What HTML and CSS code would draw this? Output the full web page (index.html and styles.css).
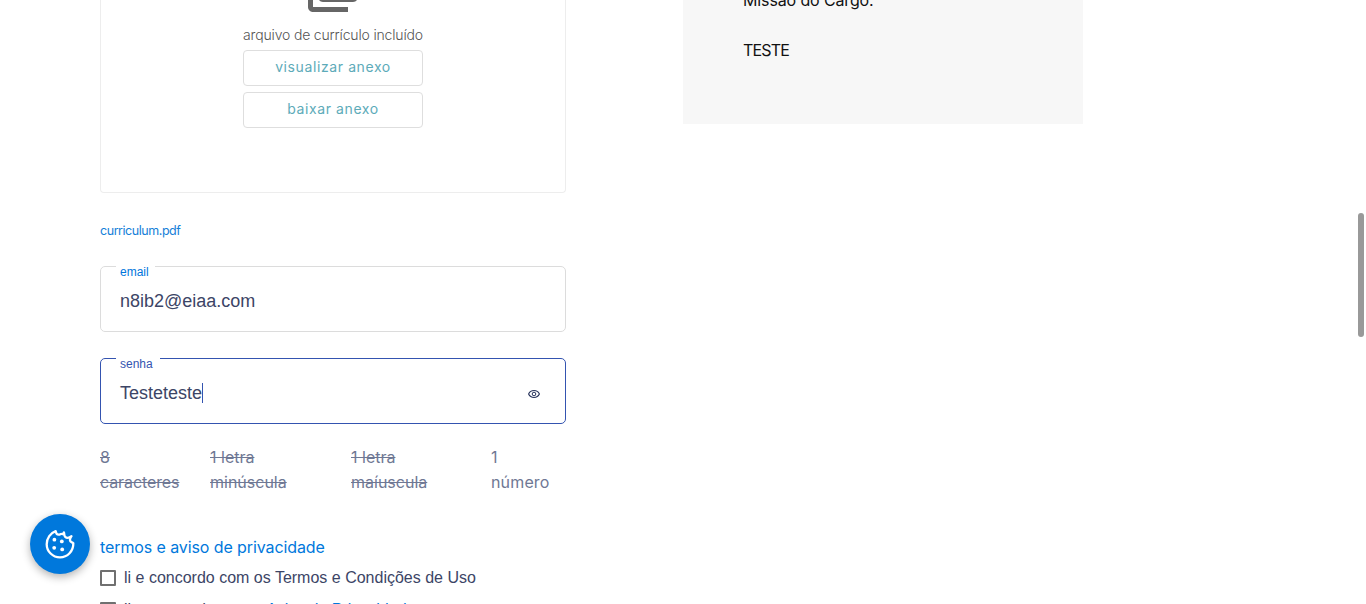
FILE: index.html
```
<!DOCTYPE html>
<html lang="pt-BR">
<head>
<meta charset="utf-8">
<title>Candidatura</title>
<link rel="stylesheet" href="styles.css">
</head>
<body>
<main class="page">
  <form class="form">
    <section class="upload">
      <svg class="upload-icon" width="60" height="60" viewBox="0 0 24 24"><path fill="#666" d="M4 6H2v14c0 1.100.9 2 2 2h14v-2H4V6zm16-4H8c-1.100 0-2 .9-2 2v12c0 1.100.9 2 2 2h12c1.100 0 2-.9 2-2V4c0-1.100-.9-2-2-2zm0 14H8V4h12v12z"/></svg>
      <p class="upload-note"><span>arquivo de currículo incluído</span></p>
      <button type="button" class="upload-btn view"><span>visualizar anexo</span></button>
      <button type="button" class="upload-btn download"><span>baixar anexo</span></button>
    </section>
    <a class="file-link"><span>curriculum.pdf</span></a>
    <fieldset class="field">
      <legend class="notch notch-email"></legend>
      <label class="field-label email-label"><span>email</span></label>
      <div class="field-row"><span class="field-value email-value">n8ib2@eiaa.com</span></div>
    </fieldset>
    <fieldset class="field focused">
      <legend class="notch notch-senha"></legend>
      <label class="field-label senha-label"><span>senha</span></label>
      <div class="field-row"><span class="field-value senha-value">Testeteste</span><i class="caret"></i>
        <svg class="eye" width="12" height="10" viewBox="0 0 12 10" fill="none" stroke="#27335c"><path d="M.6 5C2.700.4 9.300.4 11.400 5 9.300 9.600 2.700 9.600.6 5z" stroke-width="1.100"/><circle cx="6" cy="5" r="1.800"/></svg>
      </div>
    </fieldset>
    <ul class="rules">
      <li class="met"><span>8</span><br><span class="r1">caracteres</span></li>
      <li class="met"><span class="r2">1 letra</span><br><span class="r3">minúscula</span></li>
      <li class="met"><span class="r2">1 letra</span><br><span class="r4">maíuscula</span></li>
      <li><span>1</span><br><span class="r5">número</span></li>
    </ul>
    <h2 class="terms-title"><span>termos e aviso de privacidade</span></h2>
    <label class="check"><i class="box"></i><span class="check-text">li e concordo com os Termos e Condições de Uso</span></label>
    <label class="check"><i class="box"></i><span class="check-text privacy">li e concordo com o <a>Aviso de Privacidade</a></span></label>
  </form>
  <aside class="job">
    <p class="mission"><span>Missão do Cargo:</span></p>
    <p class="teste"><span>TESTE</span></p>
  </aside>
</main>
<button class="cookie" aria-label="cookies">
  <svg width="30" height="30" viewBox="0 0 30 30"><path d="M10.700 2.100C11 4.300 12 5.800 13.800 5.700c1.500-.1 1.700-1.100 2.800-.7 1 .3 2-.4 2.300-1.600.6 1.200-.1 3.300 1.300 4.500 1.700 1.400 4.200.9 6.300-.8-1.200 1.700-2.200 3.900-.9 5.500.7.900 1.800.6 2.700 1.700C28.500 22.200 22.500 28.400 15 28.400 7.700 28.400 1.700 22.500 1.700 15.200c0-6 3.800-11.200 9-13.100z" fill="none" stroke="#fff" stroke-width="2.300" stroke-linejoin="round"/><g fill="#fff"><circle cx="9.400" cy="10.700" r="1.900"/><circle cx="16.800" cy="12.400" r="1.900"/><circle cx="9.200" cy="18.800" r="1.900"/><circle cx="17.200" cy="20.400" r="1.900"/></g></svg>
</button>
<div class="scroll-thumb"></div>
</body>
</html>
```
FILE: styles.css
```
* { box-sizing: border-box; }
html, body { height: 604px; overflow: hidden; }
body { margin: 0; background: #fff; color: #3c4566; font: 16px/25px "Liberation Sans", Arial, sans-serif; }
p, h2, ul { margin: 0; padding: 0; }
.page { display: flex; align-items: flex-start; gap: 117px; padding-left: 100px; height: 604px; overflow: hidden; }
.form { width: 466px; flex: none; }
.upload { height: 193px; border: 1px solid #ededed; border-top: 0; border-radius: 0 0 4px 4px; display: flex; flex-direction: column; align-items: center; }
.upload-icon { margin-top: -43px; flex: none; }
.upload-note { margin-top: 8px; height: 25px; line-height: 20px; font-family: Inter, sans-serif; font-weight: 300; font-size: 14px; color: #555; white-space: nowrap; letter-spacing: -.17px; }
.upload-btn { width: 180px; height: 36px; padding: 0 0 3px; margin-bottom: 6px; border: 1px solid #dedede; border-radius: 4px; background: #fff; color: #5dabb9; font: 14px/19px Inter, sans-serif; letter-spacing: .6px; }
.file-link { display: block; margin-top: 28px; height: 20px; line-height: 20px; font-family: Inter, sans-serif; font-size: 12.5px; color: #1680d8; letter-spacing: -.45px; }
.field { position: relative; width: 466px; height: 66px; margin: 25px 0 0; padding: 0; border: 1px solid #dcdcdc; border-radius: 5px; }
.field.focused { border-color: #3454b0; margin-top: 26px; }
.notch { height: 1px; padding: 0; margin-left: 15px; }
.notch-email { width: 39px; }
.notch-senha { width: 44px; }
.field-label { position: absolute; left: 19px; top: -2px; font-size: 12px; line-height: 14px; color: #0076dc; }
.focused .field-label { color: #3454b0; }
.field-row { display: flex; align-items: center; height: 64px; padding: 4px 25px 0 19px; }
.field-value { font-size: 18px; line-height: 24px; }
.caret { width: 1px; height: 20px; background: #3454b0; }
.eye { margin-left: auto; margin-top: 2px; }
.rules { display: grid; grid-template-columns: 110px 141px 140px 75px; height: 50px; margin-top: 21px; list-style: none; color: #6f7894; font-family: Inter, sans-serif; }
.met span { text-decoration: line-through; }
.r1 { letter-spacing: -.1px; }
.r5 { letter-spacing: .15px; }
.terms-title { margin-top: 40px; height: 25px; line-height: 24px; font-family: Inter, sans-serif; font-size: 16px; font-weight: 400; color: #0078dc; letter-spacing: -.1px; }
.check { display: flex; align-items: center; gap: 8px; height: 32px; white-space: nowrap; }
.terms-title + .check { margin-top: 2px; }
.box { width: 16px; height: 16px; border: 2px solid #707070; border-radius: 1px; }
.check-text { padding-bottom: 2px; }
.check a { color: #0078dc; }
.job { width: 400px; height: 124px; background: #f7f7f7; padding-left: 60px; color: #111; font-family: Inter, sans-serif; }
.mission { margin-top: -12px; letter-spacing: -.13px; }
.teste { margin-top: 25px; letter-spacing: -.8px; }
.cookie { position: fixed; left: 30px; top: 514px; width: 60px; height: 60px; padding: 0; border: 0; border-radius: 50%; background: #0078dc; display: flex; align-items: center; justify-content: center; box-shadow: 0 3px 8px rgba(0,0,0,.3); }
.scroll-thumb { position: fixed; left: 1358px; top: 213px; width: 6px; height: 124px; border-radius: 3px; background: #999; }
```
